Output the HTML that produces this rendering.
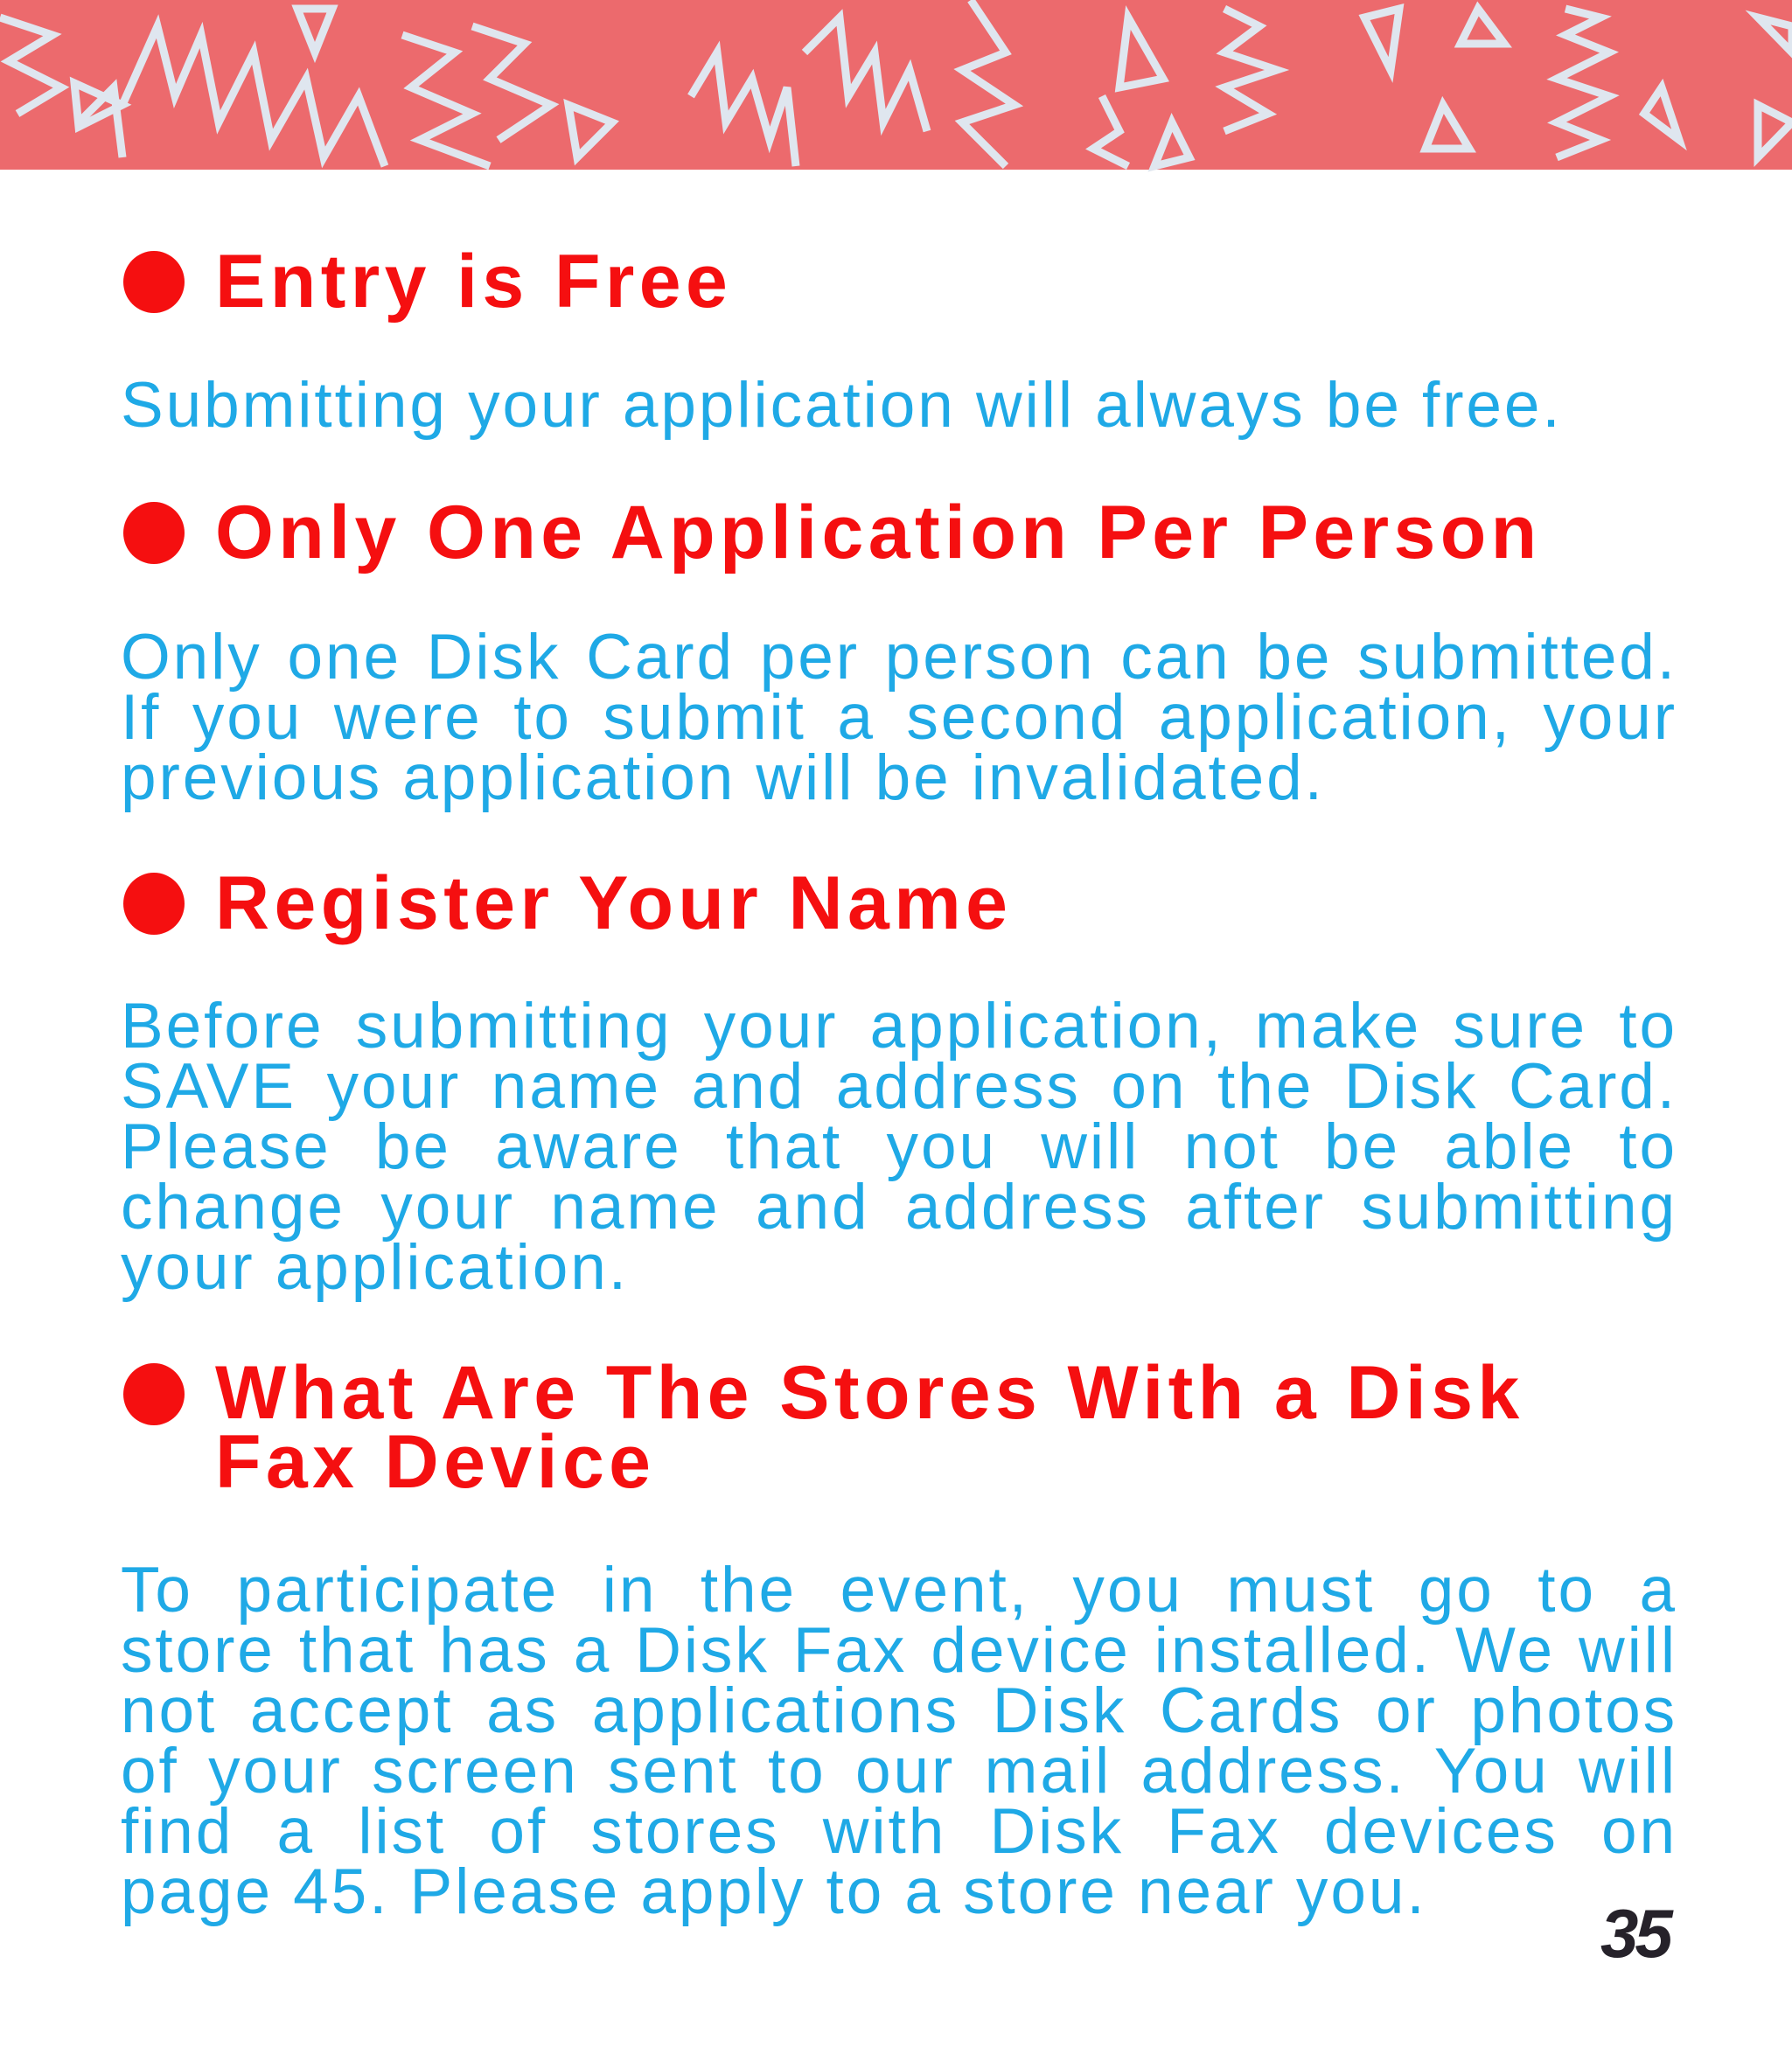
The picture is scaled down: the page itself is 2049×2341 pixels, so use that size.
<!DOCTYPE html>
<html><head><meta charset="utf-8"><style>
html,body{margin:0;padding:0;background:#fff;}
body{width:2049px;height:2341px;position:relative;overflow:hidden;font-family:"Liberation Sans",sans-serif;}
.h{position:absolute;left:246px;font-size:86px;line-height:79px;font-weight:bold;color:#f50f10;letter-spacing:5.4px;white-space:nowrap;}
.d{position:absolute;left:141px;width:70px;height:71px;border-radius:50%;background:#f50f10;}
.b{position:absolute;left:138px;width:1780px;font-size:73px;line-height:69px;color:#1fa9e6;white-space:nowrap;letter-spacing:2.9px;}
.b div{height:69px;}
.j{text-align:justify;text-align-last:justify;}
.pn{position:absolute;left:1830px;top:2166px;font-size:78px;font-weight:bold;font-style:italic;color:#26222a;letter-spacing:-4px;line-height:90px;}
</style></head><body>
<svg style="position:absolute;left:0;top:0" width="2049" height="200" viewBox="0 0 2049 200">
<rect x="0" y="0" width="2049" height="194" fill="#ec6a6d"/>
<g fill="none" stroke="#dfe6ef" stroke-width="9" stroke-linejoin="miter">
<polyline points="0,20 60,40 10,70 70,100 20,130"/>
<polyline points="140,120 180,30 200,110 230,40 250,140 290,60 310,160 350,90 370,180 410,110 440,190"/>
<polyline points="90,140 130,100 140,180"/>
<polygon points="85,95 140,120 90,145"/>
<polygon points="340,10 380,10 360,60"/>
<polyline points="460,40 520,60 470,100 540,130 480,160 560,190"/>
<polyline points="540,30 600,50 560,90 630,120 570,160"/>
<polygon points="650,120 700,140 660,180"/>
<polyline points="790,110 820,60 830,140 860,90 880,160 900,100 910,190"/>
<polyline points="920,60 960,20 970,110 1000,60 1010,140 1040,80 1060,150"/>
<polyline points="1110,0 1150,60 1100,80 1160,120 1100,140 1150,190"/>
<polygon points="1290,20 1330,90 1280,100"/>
<polyline points="1260,110 1280,150 1250,170 1290,190"/>
<polygon points="1320,190 1340,140 1360,180"/>
<polygon points="1560,20 1600,10 1590,80"/>
<polygon points="1690,10 1720,50 1670,50"/>
<polygon points="1650,120 1680,170 1630,170"/>
<polyline points="1400,10 1440,30 1400,60 1460,80 1400,100 1450,130 1400,150"/>
<polyline points="1790,10 1830,20 1790,40 1840,60 1780,90 1840,110 1780,140 1830,160 1780,180"/>
<polygon points="1900,100 1920,160 1880,130"/>
<polygon points="2010,20 2049,30 2049,60"/>
<polygon points="2010,120 2049,140 2010,180"/>
</g>
</svg>

<div class="d" style="top:287px"></div>
<div class="h" style="top:283px">Entry is Free</div>
<div class="b" style="top:429px"><div>Submitting your application will always be free.</div></div>

<div class="d" style="top:574px"></div>
<div class="h" style="top:570px">Only One Application Per Person</div>
<div class="b" style="top:717px">
<div class="j">Only one Disk Card per person can be submitted.</div>
<div class="j">If you were to submit a second application, your</div>
<div>previous application will be invalidated.</div>
</div>

<div class="d" style="top:998px"></div>
<div class="h" style="top:994px">Register Your Name</div>
<div class="b" style="top:1139px">
<div class="j">Before submitting your application, make sure to</div>
<div class="j">SAVE your name and address on the Disk Card.</div>
<div class="j">Please be aware that you will not be able to</div>
<div class="j">change your name and address after submitting</div>
<div>your application.</div>
</div>

<div class="d" style="top:1559px"></div>
<div class="h" style="top:1554px">What Are The Stores With a Disk</div>
<div class="h" style="top:1633px">Fax Device</div>
<div class="b" style="top:1784px">
<div class="j">To participate in the event, you must go to a</div>
<div class="j">store that has a Disk Fax device installed. We will</div>
<div class="j">not accept as applications Disk Cards or photos</div>
<div class="j">of your screen sent to our mail address. You will</div>
<div class="j">find a list of stores with Disk Fax devices on</div>
<div>page 45. Please apply to a store near you.</div>
</div>

<div class="pn">35</div>
</body></html>
